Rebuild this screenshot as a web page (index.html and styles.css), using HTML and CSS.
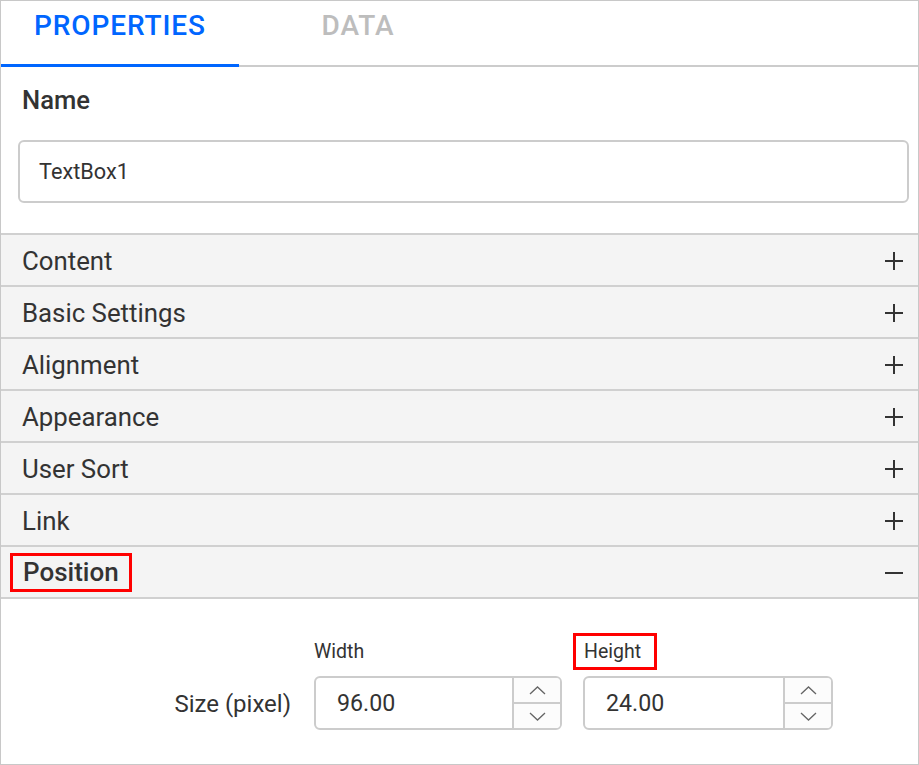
FILE: index.html
```html
<!DOCTYPE html>
<html lang="en">
<head>
    <meta charset="UTF-8">
    <meta name="viewport" content="width=device-width, initial-scale=1.0">
    <title>Properties</title>
    <link rel="stylesheet" href="styles.css">
</head>
<body>
    <div class="panel">
        <div class="tabs">
            <div class="tab active">PROPERTIES</div>
            <div class="tab">DATA</div>
        </div>

        <div class="name-section">
            <div class="name-label">Name</div>
            <div class="text-input">TextBox1</div>
        </div>

        <div class="acc-header"><span class="acc-title">Content</span><svg class="acc-icon" viewBox="0 0 18 18"><path d="M9 0V18M0 9H18"/></svg></div>
        <div class="acc-header"><span class="acc-title">Basic Settings</span><svg class="acc-icon" viewBox="0 0 18 18"><path d="M9 0V18M0 9H18"/></svg></div>
        <div class="acc-header"><span class="acc-title">Alignment</span><svg class="acc-icon" viewBox="0 0 18 18"><path d="M9 0V18M0 9H18"/></svg></div>
        <div class="acc-header"><span class="acc-title">Appearance</span><svg class="acc-icon" viewBox="0 0 18 18"><path d="M9 0V18M0 9H18"/></svg></div>
        <div class="acc-header"><span class="acc-title">User Sort</span><svg class="acc-icon" viewBox="0 0 18 18"><path d="M9 0V18M0 9H18"/></svg></div>
        <div class="acc-header"><span class="acc-title">Link</span><svg class="acc-icon" viewBox="0 0 18 18"><path d="M9 0V18M0 9H18"/></svg></div>
        <div class="acc-header open"><span class="acc-title marked">Position</span><svg class="acc-icon" viewBox="0 0 18 18"><path d="M0 9H18"/></svg></div>

        <div class="position-body">
            <div class="size-grid">
                <div></div>
                <div class="field-label">Width</div>
                <div class="field-label marked">Height</div>

                <div class="row-label">Size (pixel)</div>
                <div class="numeric">
                    <div class="numeric-value">96.00</div>
                    <div class="spin">
                        <div class="spin-btn"><svg viewBox="0 0 17 9"><path d="M1 8L8.5 1L16 8"/></svg></div>
                        <div class="spin-btn down"><svg viewBox="0 0 17 9"><path d="M1 1L8.5 8L16 1"/></svg></div>
                    </div>
                </div>
                <div class="numeric">
                    <div class="numeric-value">24.00</div>
                    <div class="spin">
                        <div class="spin-btn"><svg viewBox="0 0 17 9"><path d="M1 8L8.5 1L16 8"/></svg></div>
                        <div class="spin-btn down"><svg viewBox="0 0 17 9"><path d="M1 1L8.5 8L16 1"/></svg></div>
                    </div>
                </div>
            </div>
        </div>
    </div>
</body>
</html>
```

FILE: styles.css
```css
* {
    margin: 0;
    padding: 0;
    box-sizing: border-box;
}

body {
    font-family: Roboto, 'Liberation Sans', sans-serif;
    color: #333;
    background-color: #fff;
}

.panel {
    width: 919px;
    height: 765px;
    border: 1px solid #c8c8c8;
    overflow: hidden;
}

/* tabs */
.tabs {
    display: flex;
    height: 66px;
    border-bottom: 2px solid #ccc;
}

.tab {
    width: 238px;
    height: 66px;
    margin-bottom: -2px;
    display: flex;
    justify-content: center;
    align-items: center;
    padding-bottom: 18px;
    font-size: 28px;
    font-weight: 500;
    letter-spacing: 0.9px;
    color: #bdbdbd;
}

.tab.active {
    color: #0066ff;
    border-bottom: 3px solid #0066ff;
    padding-bottom: 15px;
}

/* name */
.name-section {
    height: 168px;
    padding: 18px 9px 0 17px;
    border-bottom: 2px solid #d0d0d0;
}

.name-label {
    font-size: 25.6px;
    font-weight: 500;
    line-height: 30px;
    padding-left: 4px;
}

.text-input {
    margin-top: 25px;
    height: 63px;
    border: 2px solid #ccc;
    border-radius: 6px;
    padding-left: 19px;
    display: flex;
    align-items: center;
    font-size: 21.7px;
}

/* accordion */
.acc-header {
    height: 52px;
    background-color: #f4f4f4;
    border-bottom: 2px solid #d0d0d0;
    display: flex;
    justify-content: space-between;
    align-items: center;
    padding: 1px 15px 0 21px;
}

.acc-title {
    font-size: 25.8px;
}

.acc-title.marked {
    font-size: 26px;
    font-weight: 500;
    margin-left: -12px;
    padding: 1px 10px 2px 10px;
    border: 3px solid #f00;
}

.acc-icon {
    width: 18px;
    height: 18px;
    fill: none;
    stroke: #333;
    stroke-width: 2;
}

/* position */
.position-body {
    padding-top: 34px;
}

.size-grid {
    display: grid;
    grid-template-columns: 290px 248px 248px;
    column-gap: 23px;
    row-gap: 6px;
}

.size-grid .numeric:last-child {
    margin-left: -2px;
}

.field-label {
    font-size: 19.5px;
    line-height: 25px;
    padding: 3px 13px 3px 8px;
    margin-left: -11px;
    border: 3px solid transparent;
    justify-self: start;
}

.field-label.marked {
    border-color: #f00;
    margin-left: -12px;
}

.row-label {
    font-size: 24px;
    text-align: right;
    align-self: center;
    padding-top: 2px;
}

.numeric {
    height: 54px;
    border: 2px solid #ccc;
    border-radius: 6px;
    display: flex;
    overflow: hidden;
}

.numeric-value {
    flex: 1;
    display: flex;
    align-items: center;
    padding-left: 21px;
    font-size: 23.2px;
}

.spin {
    width: 48px;
    border-left: 2px solid #ccc;
    display: flex;
    flex-direction: column;
    background-color: #fcfcfc;
}

.spin-btn {
    flex: 1;
    display: flex;
    justify-content: center;
    align-items: center;
}

.spin-btn.down {
    border-top: 2px solid #ccc;
}

.spin-btn svg {
    width: 17px;
    height: 9px;
    fill: none;
    stroke: #666;
    stroke-width: 1.3;
}
```
